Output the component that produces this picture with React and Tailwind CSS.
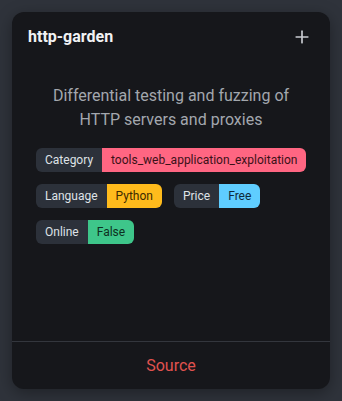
import { Plus } from 'lucide-react';

const Tag = ({ label, value, tone }) => (
  <div className="flex h-6 items-stretch overflow-hidden rounded-md text-xs leading-6">
    <span className="bg-[#2c313a] px-[9px] text-[#dfe2e7]">{label}</span>
    <span className={`px-[9px] ${tone}`}>{value}</span>
  </div>
);

export default function App() {
  return (
    <div
      className="min-h-[401px] w-[342px] bg-[#2f333b] p-3"
      style={{ fontFamily: 'Roboto, "Noto Sans", sans-serif' }}
    >
      <div className="flex h-[377px] w-[318px] flex-col rounded-xl bg-[#16171b] shadow-[0_4px_16px_rgba(0,0,0,0.35)]">
        {/* Header */}
        <div className="flex items-center justify-between pl-4 pr-[18px] pt-[13px]">
          <h2 className="text-base font-bold leading-6 text-[#f1f2f4]">http-garden</h2>
          <Plus size={20} strokeWidth={2} className="text-[#c9ccd2]" />
        </div>

        {/* Description */}
        <p className="mt-[35px] px-6 text-center text-base leading-6 text-[#a3a7ae]">
          Differential testing and fuzzing of HTTP servers and proxies
        </p>

        {/* Tags */}
        <div className="mt-4 flex flex-wrap gap-3 px-6">
          <Tag label="Category" value="tools_web_application_exploitation" tone="bg-[#ff6682] text-[#3b1118]" />
          <Tag label="Language" value="Python" tone="bg-[#ffbb1c] text-[#3d2a00]" />
          <Tag label="Price" value="Free" tone="bg-[#5fcdff] text-[#0d2a3a]" />
          <Tag label="Online" value="False" tone="bg-[#3ec68a] text-[#0e2f20]" />
        </div>

        <div className="flex-1" />

        {/* Footer */}
        <div className="flex h-12 items-center justify-center border-t border-[#33363d]">
          <span className="text-base text-[#e0524f]">Source</span>
        </div>
      </div>
    </div>
  );
}
